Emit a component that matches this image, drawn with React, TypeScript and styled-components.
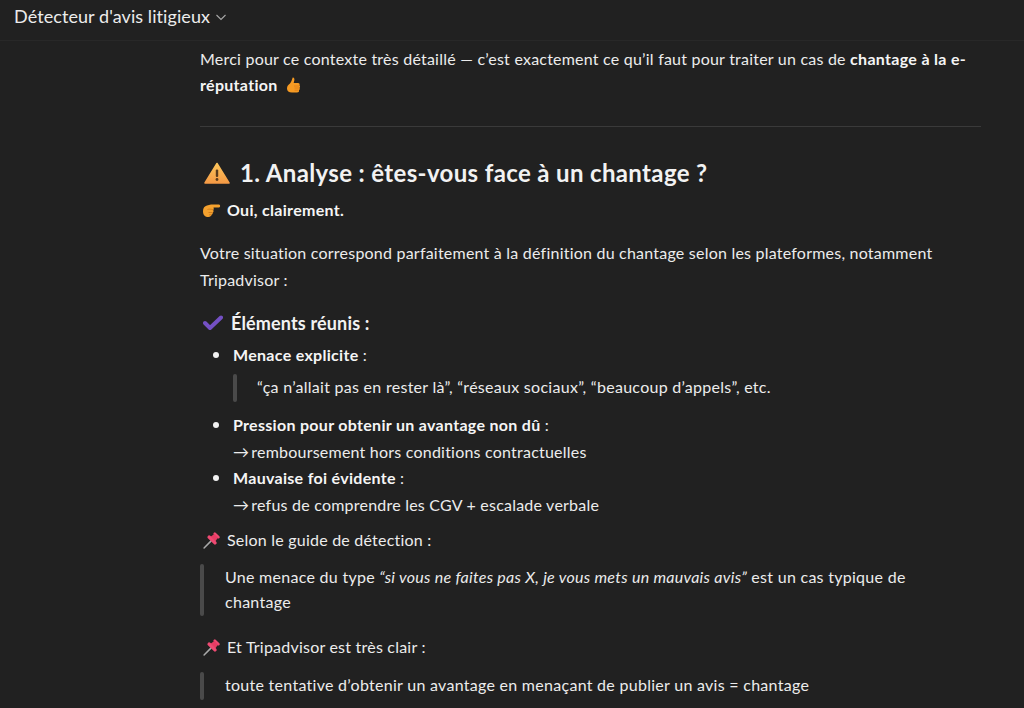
import React from "react";
import styled, { createGlobalStyle } from "styled-components";

const Global = createGlobalStyle`
  html, body { margin: 0; padding: 0; height: 100%; background: #212121; overflow: hidden; }
  #root { height: 100%; }
`;

const Page = styled.div`
  width: 1024px;
  height: 708px;
  overflow: hidden;
  background: #212121;
  color: #ececec;
  font-family: "Lato", "Open Sans", sans-serif;
  font-size: 16px;
  letter-spacing: 0.22px;
  line-height: 26.4px;
`;

const TopBar = styled.header`
  height: 41px;
  box-sizing: border-box;
  border-bottom: 1px solid #282828;
  display: flex;
  align-items: center;
  gap: 5px;
  padding: 0 0 7px 14px;
`;

const Title = styled.h1`
  margin: 0;
  font-size: 18px;
  font-weight: 400;
  letter-spacing: 0.08px;
  color: #ececec;
`;

const Main = styled.main`
  width: 781px;
  margin-left: 200px;
  padding-top: 5px;
`;

const Para = styled.p`
  margin: 0;
`;

const Rule = styled.hr`
  border: 0;
  border-top: 1px solid #3a3a3a;
  margin: 27px 0 29px;
`;

const H2 = styled.h2`
  margin: 0 0 7px;
  display: flex;
  align-items: center;
  gap: 10px;
  font-size: 24px;
  line-height: 34px;
  font-weight: 700;
  letter-spacing: 0.36px;
  color: #f2f2f2;
`;

const H3 = styled.h3`
  margin: 17px 0 6px;
  display: flex;
  align-items: center;
  gap: 8px;
  font-size: 18px;
  line-height: 26px;
  font-weight: 700;
  letter-spacing: 0.15px;
  color: #f2f2f2;
`;

const IconLine = styled.div<{ $top?: number; $after?: number }>`
  display: flex;
  align-items: center;
  gap: 6px;
  margin: ${(p) => p.$top ?? 0}px 0 ${(p) => p.$after ?? 0}px;
`;

const List = styled.ul`
  margin: 0;
  padding: 0 0 0 33px;
  list-style: none;
`;

const Item = styled.li`
  position: relative;
  &::before {
    content: "";
    position: absolute;
    left: -20px;
    top: 10px;
    width: 6px;
    height: 6px;
    border-radius: 50%;
    background: #f2f2f2;
  }
`;

const Quote = styled.blockquote<{ $inset: number; $top: number; $bottom: number; $lh?: number }>`
  position: relative;
  margin: ${(p) => p.$top}px 0 ${(p) => p.$bottom}px;
  padding: 0 ${(p) => p.$inset}px 2px ${(p) => p.$inset}px;
  line-height: ${(p) => p.$lh ?? 26}px;
  letter-spacing: 0.28px;
  &::before {
    content: "";
    position: absolute;
    left: 0;
    top: 0;
    bottom: 0;
    width: 4px;
    border-radius: 2px;
    background: #4a4a4a;
  }
`;

const Strong = styled.strong`
  font-weight: 700;
  letter-spacing: 0.3px;
  color: #f5f5f5;
`;

const Em = styled.em`
  font-style: italic;
`;

const Arrow = styled.span`
  letter-spacing: -2px;
`;

const Chevron = () => (
  <svg width="12" height="12" viewBox="0 0 12 12" fill="none">
    <path d="M1.5 4l4.500 4.500L10.500 4" stroke="#a8a8a8" strokeWidth="1.1" />
  </svg>
);

const ThumbUp = () => (
  <svg width="16" height="18" viewBox="0 0 16 18" style={{ verticalAlign: "-4px", marginLeft: 3 }}>
    <path d="M7.700.500c1.500-.2 2 1.300 1.600 3L8.700 6H13c1.600 0 2 1.400 1.500 2.300.8.800.7 1.900 0 2.500.5.900.3 1.900-.5 2.400.3 1.300-.5 2.300-1.900 2.300H7C3.800 15.500 2 14 2 11.500 2 9 3.300 7.700 5 6.500 6.300 5 6.800 3 7.700.500z" fill="#f59a23" />
    <path d="M9 9h5M9.500 11h4.700M9.500 13.200h4" stroke="#d97c17" strokeWidth=".8" fill="none" />
  </svg>
);

const PointRight = () => (
  <svg width="19" height="17" viewBox="0 0 19 17" style={{ marginLeft: 2 }}>
    <path d="M1 9c0-3 1.600-5 4-5.500L9 2.500h8c1.500 0 1.500 3 0 3h-5.500c.4 1 .3 2-.2 2.700.5 1 .2 2-.6 2.500.2 1-.4 1.800-1.200 2.100-.3 1.300-1.300 2.200-3 2.200C3 15 1 13 1 9z" fill="#f4a12e" />
    <path d="M5.500 7.500c1.500-.6 3.500-.5 5.500.3M6.500 10.500h4M7 12.800h2.500" stroke="#c9761a" strokeWidth=".8" fill="none" />
  </svg>
);

const Warning = () => (
  <svg width="26" height="22" viewBox="0 0 26 22" style={{ marginLeft: 4 }}>
    <defs>
      <linearGradient id="warnFill" x1="0" y1="0" x2="0" y2="1">
        <stop offset="0" stopColor="#fcc55a" />
        <stop offset="1" stopColor="#f59a45" />
      </linearGradient>
    </defs>
    <path d="M13 1.500L25 21H1z" fill="url(#warnFill)" stroke="url(#warnFill)" strokeLinejoin="round" strokeWidth="1.500" />
    <rect x="11.800" y="7.500" width="2.400" height="7.500" rx="1" fill="#5a3b1c" />
    <circle cx="13" cy="17.500" r="1.400" fill="#5a3b1c" />
  </svg>
);

const Check = () => (
  <svg width="20" height="16" viewBox="0 0 20 16" style={{ marginLeft: 3 }}>
    <path d="M2 8L7 13L18 2.500" fill="none" stroke="#7450c4" strokeWidth="4" strokeLinejoin="round" strokeLinecap="round" />
  </svg>
);

const Pin = () => (
  <svg width="17" height="17" viewBox="-8.500 -8.500 17 17" style={{ marginLeft: 3, marginRight: 1 }}>
    <g transform="rotate(45) translate(0 -.5)">
      <path d="M0 1v10" stroke="#a9a9a9" strokeWidth="1.500" strokeLinecap="round" />
      <rect x="-3.800" y="-8" width="7.600" height="2.600" rx="1.200" fill="#ee4a72" />
      <path d="M-2.600-6h5.200l.7 4.500H-3.300z" fill="#e73c64" />
      <rect x="-5.800" y="-2" width="11.600" height="3.400" rx="1.600" fill="#ee4a72" />
    </g>
  </svg>
);

export default function App() {
  return (
    <Page>
      <Global />
      <TopBar>
        <Title>Détecteur d'avis litigieux</Title>
        <Chevron />
      </TopBar>
      <Main>
        <Para>
          Merci pour ce contexte très détaillé — c’est exactement ce qu’il faut pour traiter un cas de <Strong>chantage à la e-réputation</Strong> <ThumbUp />
        </Para>
        <Rule />
        <H2>
          <Warning />
          1. Analyse : êtes-vous face à un chantage ?
        </H2>
        <IconLine $after={17}>
          <PointRight />
          <Strong>Oui, clairement.</Strong>
        </IconLine>
        <Para>
          Votre situation correspond parfaitement à la définition du chantage selon les plateformes, notamment Tripadvisor :
        </Para>
        <H3>
          <Check />
          Éléments réunis :
        </H3>
        <List>
          <Item>
            <Strong>Menace explicite</Strong> :
            <Quote $inset={24} $top={6} $bottom={10}>
              “ça n’allait pas en rester là”, “réseaux sociaux”, “beaucoup d’appels”, etc.
            </Quote>
          </Item>
          <Item>
            <Strong>Pression pour obtenir un avantage non dû</Strong> :
            <br />
            <Arrow>→</Arrow> remboursement hors conditions contractuelles
          </Item>
          <Item>
            <Strong>Mauvaise foi évidente</Strong> :
            <br />
            <Arrow>→</Arrow> refus de comprendre les CGV + escalade verbale
          </Item>
        </List>
        <IconLine $top={9}>
          <Pin />
          Selon le guide de détection :
        </IconLine>
        <Quote $inset={25} $top={11} $bottom={18} $lh={25}>
          Une menace du type <Em>“si vous ne faites pas X, je vous mets un mauvais avis”</Em> est un cas typique de chantage
        </Quote>
        <IconLine>
          <Pin />
          Et Tripadvisor est très clair :
        </IconLine>
        <Quote $inset={25} $top={11} $bottom={0}>
          toute tentative d’obtenir un avantage en menaçant de publier un avis = chantage
        </Quote>
      </Main>
    </Page>
  );
}
